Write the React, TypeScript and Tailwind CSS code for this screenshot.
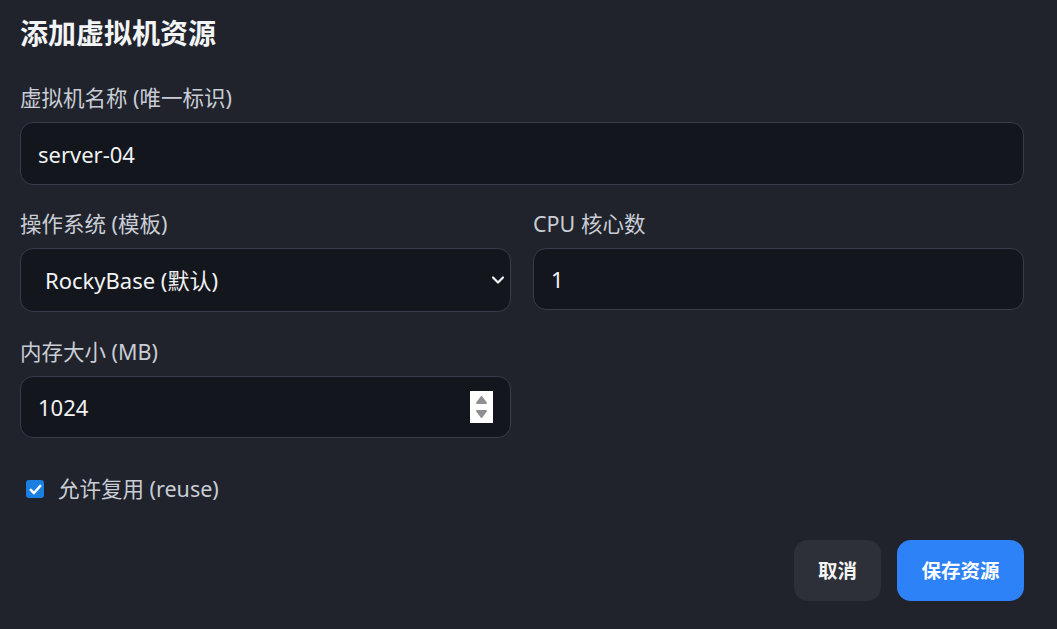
import React, { useState } from 'react';

const font = { fontFamily: '"Noto Sans", "Noto Sans CJK SC", sans-serif' };

const inputCls =
  'w-full bg-[#13161d] border border-[#373c48] rounded-[13px] text-[22px] text-[#f1f2f4] px-[17px] outline-none';

const Label = ({ children }: { children: React.ReactNode }) => (
  <label className="block text-[21.5px] leading-[28px] text-[#c9cdd5]">{children}</label>
);

export default function App() {
  const [name, setName] = useState('server-04');
  const [os, setOs] = useState('rocky');
  const [cpu, setCpu] = useState('1');
  const [mem, setMem] = useState('1024');
  const [reuse, setReuse] = useState(true);

  return (
    <div className="min-h-screen w-full bg-[#20232b] pl-[20px] pr-[33px] pt-[16px] pb-[28px]" style={font}>
      <h2 className="text-[28px] leading-[34px] font-bold text-[#f3f4f6]">添加虚拟机资源</h2>

      <div className="mt-[34px]">
        <Label>虚拟机名称 (唯一标识)</Label>
        <input
          className={`${inputCls} mt-[10px] h-[63px]`}
          value={name}
          onChange={(e) => setName(e.target.value)}
        />
      </div>

      <div className="mt-[25px] grid grid-cols-2 gap-x-[22px] items-start">
        <div>
          <Label>操作系统 (模板)</Label>
          <div className="relative mt-[10px]">
            <select
              className={`${inputCls} h-[64px] appearance-none pl-[24px]`}
              value={os}
              onChange={(e) => setOs(e.target.value)}
            >
              <option value="rocky">RockyBase (默认)</option>
              <option value="ubuntu">UbuntuBase</option>
            </select>
            <svg
              className="pointer-events-none absolute right-[6px] top-[27px]"
              width="14"
              height="10"
              viewBox="0 0 14 10"
              fill="none"
              stroke="#f1f2f4"
              strokeWidth="2.2"
              strokeLinecap="round"
              strokeLinejoin="round"
            >
              <polyline points="2,2.5 7,7.5 12,2.5" />
            </svg>
          </div>
        </div>
        <div>
          <Label>CPU 核心数</Label>
          <input
            className={`${inputCls} mt-[10px] h-[62px]`}
            value={cpu}
            onChange={(e) => setCpu(e.target.value)}
          />
        </div>
      </div>

      <div className="mt-[26px] grid grid-cols-2 gap-x-[22px]">
        <div>
          <Label>内存大小 (MB)</Label>
          <div className="relative mt-[10px]">
            <input
              className={`${inputCls} h-[62px]`}
              value={mem}
              onChange={(e) => setMem(e.target.value)}
            />
            {/* spinner */}
            <div className="absolute right-[18px] top-[15px] w-[23px] h-[32px] bg-white flex flex-col items-center justify-center gap-[6px]">
              <svg width="13" height="9" viewBox="0 0 13 9">
                <path d="M2 8 L6.5 2 L11 8 Z" fill="#8f8f8f" stroke="#8f8f8f" strokeWidth="2" strokeLinejoin="round" />
              </svg>
              <svg width="13" height="9" viewBox="0 0 13 9">
                <path d="M2 1 L6.5 7 L11 1 Z" fill="#8f8f8f" stroke="#8f8f8f" strokeWidth="2" strokeLinejoin="round" />
              </svg>
            </div>
          </div>
        </div>
      </div>

      <div className="mt-[37px] flex items-center h-[28px]">
        <button
          className="ml-[6px] w-[18px] h-[18px] rounded-[3px] bg-[#1a7fe0] flex items-center justify-center"
          onClick={() => setReuse(!reuse)}
          aria-label="reuse"
        >
          {reuse && (
            <svg width="13" height="11" viewBox="0 0 13 11" fill="none" stroke="white" strokeWidth="2.6" strokeLinecap="round" strokeLinejoin="round">
              <polyline points="1.8,5.8 5,9 11.2,2" />
            </svg>
          )}
        </button>
        <span className="ml-[14px] text-[21.5px] text-[#c9cdd5]">允许复用 (reuse)</span>
      </div>

      <div className="mt-[37px] flex justify-end gap-[16px]">
        <button className="w-[87px] h-[61px] rounded-[14px] bg-[#2d3038] text-[19.5px] font-bold text-[#f3f4f6]">
          取消
        </button>
        <button className="w-[127px] h-[61px] rounded-[14px] bg-[#2e82f7] text-[19.5px] font-bold text-white">
          保存资源
        </button>
      </div>
    </div>
  );
}
